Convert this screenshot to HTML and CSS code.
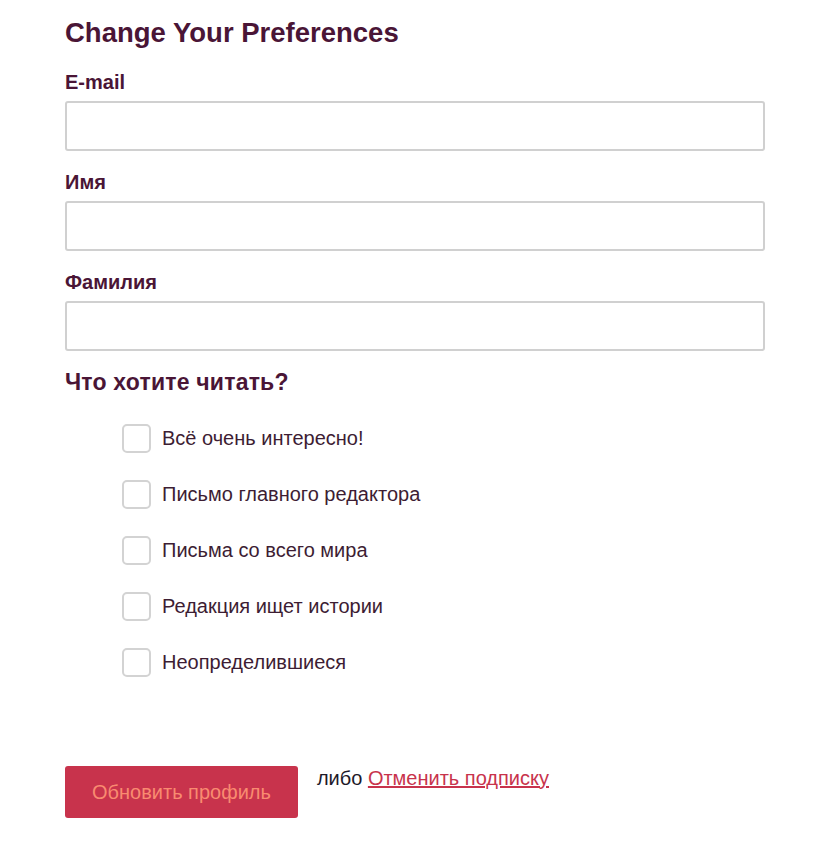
FILE: index.html
```html
<!DOCTYPE html>
<html lang="ru">
<head>
<meta charset="utf-8">
<title>Change Your Preferences</title>
<link rel="stylesheet" href="styles.css">
</head>
<body>
<form class="prefs">
  <h1 class="prefs-title">Change Your Preferences</h1>
  <div class="field">
    <label class="field-label" for="email">E-mail</label>
    <input class="field-input" id="email" type="email">
  </div>
  <div class="field">
    <label class="field-label" for="fname">Имя</label>
    <input class="field-input" id="fname" type="text">
  </div>
  <div class="field">
    <label class="field-label" for="lname">Фамилия</label>
    <input class="field-input" id="lname" type="text">
  </div>
  <h2 class="section-title">Что хотите читать?</h2>
  <ul class="options">
    <li class="option"><span class="checkbox"></span><span class="option-text">Всё очень интересно!</span></li>
    <li class="option"><span class="checkbox"></span><span class="option-text">Письмо главного редактора</span></li>
    <li class="option"><span class="checkbox"></span><span class="option-text">Письма со всего мира</span></li>
    <li class="option"><span class="checkbox"></span><span class="option-text">Редакция ищет истории</span></li>
    <li class="option"><span class="checkbox"></span><span class="option-text">Неопределившиеся</span></li>
  </ul>
  <div class="actions">
    <button class="btn-submit" type="button">Обновить профиль</button>
    <span class="alt-text">либо <a class="unsub" href="#">Отменить подписку</a></span>
  </div>
</form>
</body>
</html>
```
FILE: styles.css
```css
html, body {
  margin: 0;
  padding: 0;
  background: #ffffff;
}
body {
  font-family: "Liberation Sans", Arial, sans-serif;
  color: #4a1536;
}
.prefs {
  width: 700px;
  padding: 17px 0 0 65px;
}
.prefs-title {
  margin: 0;
  font-size: 27.5px;
  line-height: 32px;
  font-weight: bold;
  color: #4a1536;
}
.field {
  display: flex;
  flex-direction: column;
  margin-top: 21px;
}
.field + .field {
  margin-top: 19px;
}
.field-label {
  font-size: 20px;
  line-height: 24px;
  font-weight: bold;
  color: #4a1536;
  margin-bottom: 7px;
}
.field-input {
  box-sizing: border-box;
  width: 700px;
  height: 50px;
  border: 2px solid #d0d0d0;
  border-radius: 3px;
  margin: 0;
  padding: 0 10px;
  font: inherit;
  background: #fff;
}
.section-title {
  margin: 18px 0 0 0;
  font-size: 23px;
  line-height: 26px;
  font-weight: bold;
  color: #4a1536;
  letter-spacing: 0.2px;
}
.options {
  list-style: none;
  margin: 29px 0 0 0;
  padding: 0 0 0 57px;
  display: flex;
  flex-direction: column;
  gap: 27px;
}
.option {
  display: flex;
  align-items: center;
  gap: 11px;
  height: 29px;
}
.checkbox {
  box-sizing: border-box;
  width: 29px;
  height: 29px;
  border: 2px solid #d3d3d3;
  border-radius: 5px;
  background: #fff;
  flex: none;
}
.option-text {
  font-size: 20px;
  color: #3d1d33;
}
.actions {
  display: flex;
  align-items: flex-start;
  gap: 19px;
  margin-top: 89px;
}
.btn-submit {
  height: 52px;
  padding: 0 27px;
  border: none;
  border-radius: 3px;
  background: #c8334c;
  color: #f98b70;
  font-family: "Liberation Sans", Arial, sans-serif;
  font-size: 20px;
}
.alt-text {
  font-size: 20px;
  line-height: 22px;
  color: #1e1a2a;
  padding-top: 1px;
}
.unsub {
  color: #c8334c;
  text-decoration: underline;
}
```
